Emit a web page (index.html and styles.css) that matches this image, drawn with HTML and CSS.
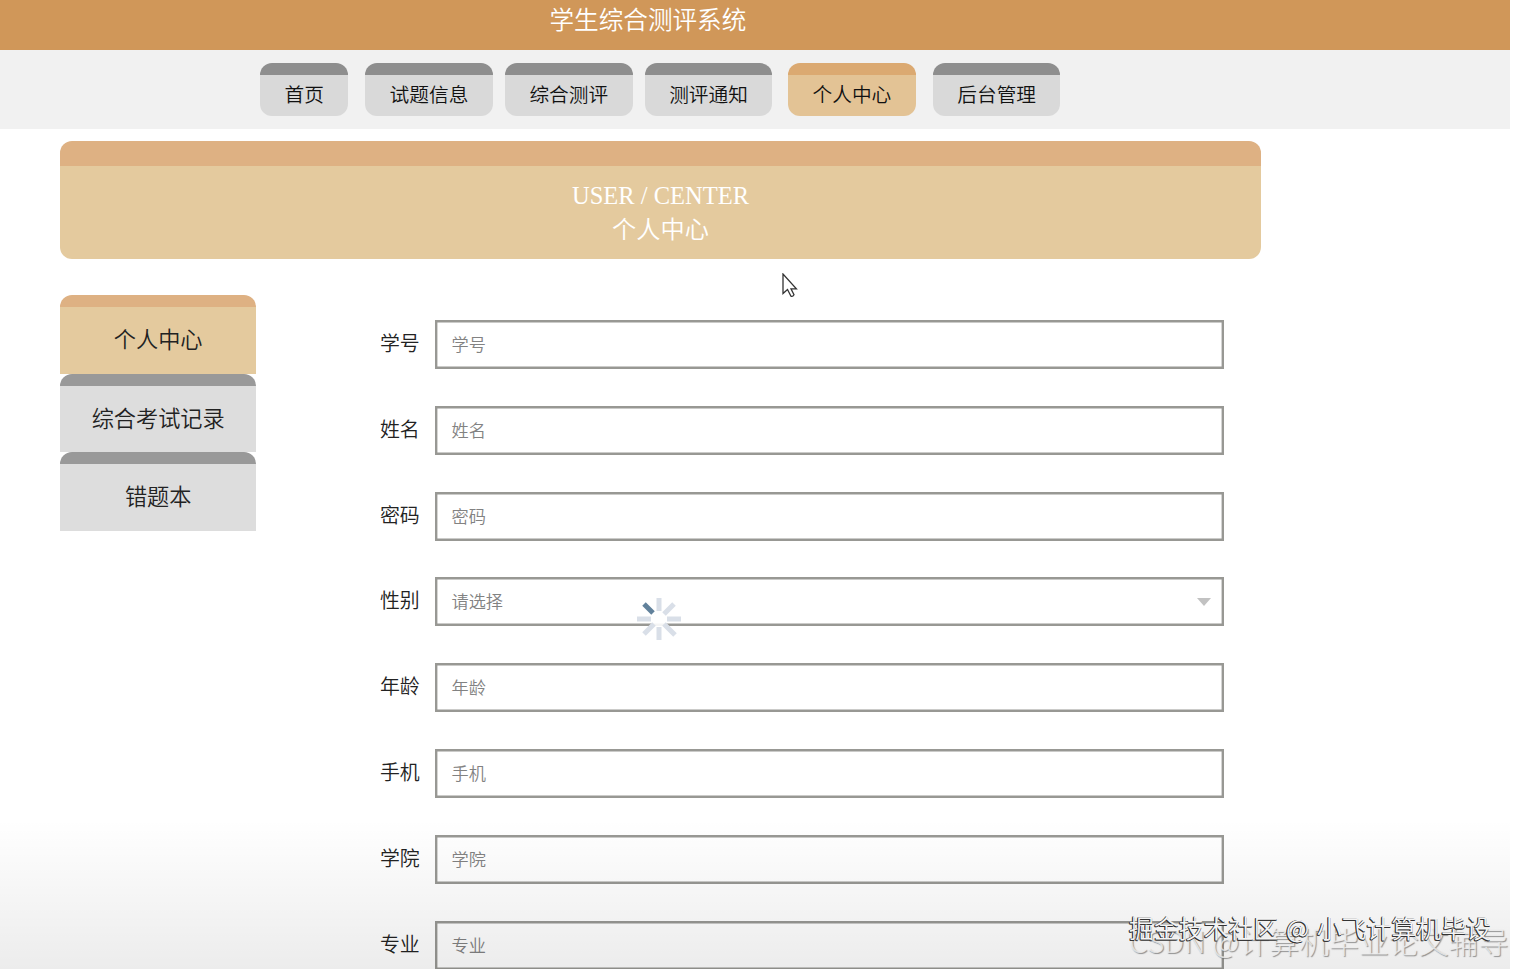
FILE: index.html
```html
<!DOCTYPE html>
<html lang="zh-CN">
<head>
<meta charset="utf-8">
<title>学生综合测评系统</title>
<link rel="stylesheet" href="styles.css">
</head>
<body>
<div class="page">
  <header class="header"><h1 class="title">学生综合测评系统</h1></header>
  <nav class="nav">
    <a class="tab tab-short">首页</a>
    <a class="tab tab-info">试题信息</a>
    <a class="tab">综合测评</a>
    <a class="tab">测评通知</a>
    <a class="tab tab-active">个人中心</a>
    <a class="tab tab-admin">后台管理</a>
  </nav>
  <section class="banner">
    <div class="banner-en">USER / CENTER</div>
    <div class="banner-cn">个人中心</div>
  </section>
  <main class="main">
    <aside class="side">
      <a class="side-item side-active">个人中心</a>
      <a class="side-item">综合考试记录</a>
      <a class="side-item">错题本</a>
    </aside>
    <form class="form">
      <div class="row"><label class="label">学号</label><div class="field">学号</div></div>
      <div class="row"><label class="label">姓名</label><div class="field">姓名</div></div>
      <div class="row"><label class="label">密码</label><div class="field">密码</div></div>
      <div class="row"><label class="label">性别</label><div class="field">请选择<svg class="caret" viewBox="0 0 14 8"><path d="M0 0H14L7 8Z"/></svg></div></div>
      <div class="row"><label class="label">年龄</label><div class="field">年龄</div></div>
      <div class="row"><label class="label">手机</label><div class="field">手机</div></div>
      <div class="row"><label class="label">学院</label><div class="field">学院</div></div>
      <div class="row"><label class="label">专业</label><div class="field">专业</div></div>
    </form>
  </main>
  <div class="shade"></div>
</div>
<svg class="spinner" viewBox="-22 -22 44 44">
  <circle class="hub" r="8"/>
  <g class="spokes">
    <path d="M0-8V-21M5-5L15-15M8 0H22M5 5L16 16M0 8V21M-5 5L-15 15M-8 0H-22"/>
  </g>
  <path class="spoke-on" d="M-6-6L-15-15"/>
</svg>
<svg class="cursor" viewBox="0 0 16 25"><path d="M1 1V20.5L5.5 16.5L9 23.2Q10.8 24 12 21.8L9 15.8H14.4Z"/></svg>
<div class="mark mark-back">CSDN @计算机毕业论文辅导</div>
<div class="mark mark-front">掘金技术社区 @ 小飞计算机毕设</div>
</body>
</html>
```
FILE: styles.css
```css
* { box-sizing: border-box; }
body {
  margin: 0;
  height: 969px;
  overflow: hidden;
  position: relative;
  background: #fff;
  color: #222;
  font-family: "Noto Sans CJK SC", sans-serif;
  font-weight: 350;
}
.page {
  position: relative;
  width: 1510px;
  height: 969px;
  overflow: hidden;
}
.header {
  height: 50.4px;
  background: #d09759;
  padding-left: 549.5px;
}
.title {
  margin: 0;
  font-size: 24.6px;
  font-weight: 350;
  line-height: 37px;
  color: #fff;
}
.nav {
  height: 78.6px;
  padding: 12.3px 0 0 260px;
  display: flex;
  gap: 12.2px;
  background: #f1f1f1;
}
.tab {
  width: 127.6px;
  height: 53.7px;
  border-top: 12px solid #8e8e8e;
  border-radius: 12px;
  background: #d9d9d9;
  color: #111;
  font-size: 19.7px;
  line-height: 38px;
  text-align: center;
}
.tab-short { width: 88.4px; }
.tab-info { margin-left: 4.6px; }
.tab-active {
  margin-left: 3.6px;
  background: #e3c395;
  border-top-color: #dba971;
}
.tab-admin { margin-left: 5px; }
.banner {
  width: 1201px;
  height: 117.6px;
  margin: 12px 0 0 60px;
  padding-top: 13px;
  border-top: 25px solid #deb183;
  border-radius: 12px;
  background: #e4ca9e;
  color: #fff;
  text-align: center;
  font-family: "Liberation Serif", "Noto Sans CJK SC", serif;
  font-size: 24.5px;
  line-height: 34px;
}
.banner-cn { height: 34px; line-height: 34px; font-size: 24.2px; }
.main {
  display: flex;
  padding: 36.9px 0 0 60px;
}
.side { width: 196.4px; }
.side-item {
  display: block;
  height: 78.4px;
  border-top: 12px solid #999;
  border-radius: 12px 12px 0 0;
  background: #ddd;
  font-size: 22.2px;
  line-height: 63px;
  text-align: center;
}
.side-active {
  border-top-color: #deb183;
  background: #e4ca9e;
}
.form {
  margin: 24.5px 0 0 123.6px;
  width: 844.5px;
  display: flex;
  flex-direction: column;
  gap: 36.8px;
}
.row {
  height: 49px;
  flex: none;
  display: flex;
}
.label {
  width: 55px;
  font-size: 19.9px;
  line-height: 46px;
}
.field {
  flex: 1;
  display: flex;
  justify-content: space-between;
  align-items: center;
  padding: 0 11px 1px 14.5px;
  border: 2px solid #989894;
  box-shadow: inset 0 0 0 .4px #989894;
  font-size: 17.2px;
  line-height: 42px;
  color: #828282;
}
.caret {
  width: 14px;
  height: 8px;
  margin-top: 1px;
  fill: #c2c2c2;
}
.shade {
  position: absolute;
  left: 0;
  right: 0;
  bottom: 0;
  height: 150px;
  background: linear-gradient(rgba(0, 0, 0, 0), rgba(0, 0, 0, .075));
}
.spinner {
  position: absolute;
  left: 637px;
  top: 597px;
  width: 44px;
  height: 44px;
  fill: none;
  stroke-width: 5;
}
.hub { fill: #fff; fill-opacity: .9; }
.spokes { stroke: #d9dfe8; }
.spoke-on { stroke: #61819b; }
.cursor {
  position: absolute;
  left: 782px;
  top: 273px;
  width: 16px;
  height: 25px;
  fill: #fff;
  stroke: #333;
  stroke-width: 1.3;
}
.mark {
  position: absolute;
  white-space: nowrap;
  line-height: 36px;
}
.mark-back {
  left: 1129px;
  top: 922px;
  font-size: 29.9px;
  font-weight: 300;
  color: rgba(240, 240, 240, .8);
  text-shadow: 1px 1px 1px rgba(110, 110, 110, .75);
}
.mark-front {
  left: 1129px;
  top: 909px;
  font-size: 24.9px;
  word-spacing: 2px;
  color: #f4f4f4;
  text-shadow: -1px 1px 0 #333, -1px 0 0 #333, 0 1px 0 #333;
}
```
